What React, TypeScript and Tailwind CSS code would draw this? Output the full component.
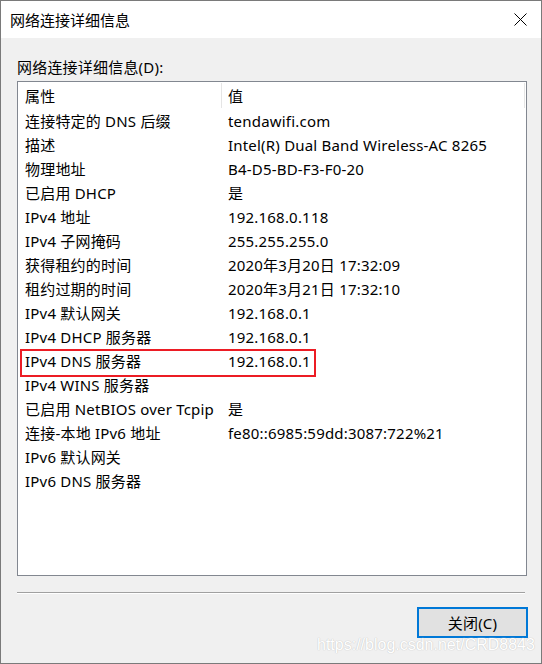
import React from "react";

const rows: [string, string][] = [
  ["连接特定的 DNS 后缀", "tendawifi.com"],
  ["描述", "Intel(R) Dual Band Wireless-AC 8265"],
  ["物理地址", "B4-D5-BD-F3-F0-20"],
  ["已启用 DHCP", "是"],
  ["IPv4 地址", "192.168.0.118"],
  ["IPv4 子网掩码", "255.255.255.0"],
  ["获得租约的时间", "2020年3月20日 17:32:09"],
  ["租约过期的时间", "2020年3月21日 17:32:10"],
  ["IPv4 默认网关", "192.168.0.1"],
  ["IPv4 DHCP 服务器", "192.168.0.1"],
  ["IPv4 DNS 服务器", "192.168.0.1"],
  ["IPv4 WINS 服务器", ""],
  ["已启用 NetBIOS over Tcpip", "是"],
  ["连接-本地 IPv6 地址", "fe80::6985:59dd:3087:722%21"],
  ["IPv6 默认网关", ""],
  ["IPv6 DNS 服务器", ""],
];

export default function App() {
  return (
    <div
      className="relative w-[542px] h-[664px] border border-[#7a7a7a] bg-[#f0f0f0] flex flex-col overflow-hidden text-black text-[15px] tracking-[0.2px]"
      style={{ fontFamily: '"Noto Sans", "Noto Sans CJK SC", sans-serif' }}
    >
      {/* Title bar */}
      <div className="h-[37px] shrink-0 bg-white flex items-center justify-between pl-[9px] pr-[14px]">
        <span className="leading-[20px] tracking-normal">网络连接详细信息</span>
        <svg width="13" height="13" viewBox="0 0 13 13" className="block">
          <path d="M0.5 0.5 L12.5 12.5 M12.5 0.5 L0.5 12.5" stroke="#000" strokeWidth="1" fill="none" />
        </svg>
      </div>

      {/* Body */}
      <div className="flex flex-col pl-[16px] pr-[14px]">
        <div className="mt-[19px] h-[20px] leading-[20px]">网络连接详细信息(D):</div>
        <div className="relative mt-[4px] h-[495px] border border-[#828790] bg-white">
          {/* header */}
          <div className="flex h-[27px] items-center">
            <div className="w-[203px] pl-[7px] leading-[20px]">属性</div>
            <div className="w-px h-[25px] bg-[#e5e5e5]" />
            <div className="flex-1 pl-[6px] leading-[20px]">值</div>
            <div className="w-px h-[25px] bg-[#e5e5e5] mr-[1px]" />
          </div>
          {rows.map(([k, v]) => (
            <div key={k} className="flex h-[24px] items-center">
              <div className="w-[204px] pl-[7px] leading-[20px] whitespace-nowrap">{k}</div>
              <div className="flex-1 pl-[6px] leading-[20px] whitespace-nowrap">{v}</div>
            </div>
          ))}
          {/* red highlight */}
          <div className="absolute left-[2px] top-[267px] w-[296px] h-[28px] border-2 border-[#ec1c24]" />
        </div>
        {/* separator */}
        <div className="mt-[16px] mr-[2px] h-px bg-[#a0a0a0]" />
        <div className="mr-[2px] h-px bg-white" />
        <div className="flex justify-end mt-[13px] mr-[-1px]">
          <button className="w-[111px] h-[31px] border-2 border-[#0078d7] bg-[#e1e1e1] flex items-center justify-center leading-[20px]">
            关闭(C)
          </button>
        </div>
      </div>

      {/* watermark */}
      <div
        className="absolute left-[316px] top-[634px] text-[16px] leading-[20px] tracking-normal text-white whitespace-nowrap pointer-events-none"
        style={{ fontFamily: '"Liberation Sans", Arial, sans-serif', textShadow: "0 0 1px #c8c8c8, 0 0 1px #c8c8c8" }}
      >
        https://blog.csdn.net/CRD8843
      </div>
    </div>
  );
}
